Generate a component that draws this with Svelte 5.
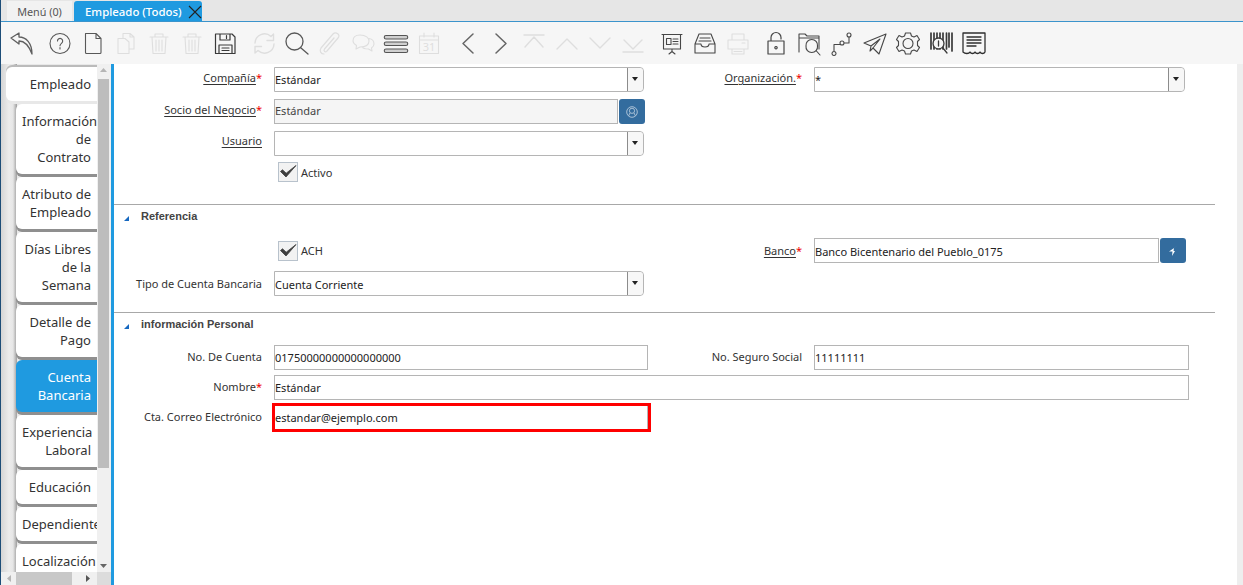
<script>
  const D = '#585858', L = '#dedede', K = '#474747';
  const tools = [
    { c: '#5f5f5f', w: 1.3, d: 'M3 9 11 4 11 8C18 8 24 14 24 25 21 17 17 12 11 12L11 15Z', gap: 1 },
    { c: D, w: 1.1, d: 'M24 14.500A10 10 0 1 1 4 14.500 10 10 0 1 1 24 14.500ZM11.500 12a2.600 2.600 0 1 1 4.200 2.100c-1 .8-1.700 1.200-1.700 2.700M14 18.500v1.500', gap: 5 },
    { c: D, w: 1.1, d: 'M6.500 4.500H17L22 9.500V23.500a1 1 0 0 1-1 1H7.500a1 1 0 0 1-1-1ZM17 4.500V9.500H22' },
    { c: L, w: 1.1, d: 'M6 9.500H13L17 13V24.500H6ZM11 9.500V4.500H18L22 8V20H17M18 4.500V8H22' },
    { c: L, w: 1.1, d: 'M5 8H23M10 8V5H18V8M7 8 8 24.500H20L21 8M11 11V22M14 11V22M17 11V22' },
    { c: L, w: 1.1, d: 'M5 8H23M10 8V5H18V8M7 8 8 24.500H20L21 8M11 11V22M14 11V22M17 11V22' },
    { c: '#3a3a3a', w: 1.2, d: 'M4.500 5H21L24 8V24.500H4.500ZM9 5V11H19V5M15.500 6.500V9.500M8 24.500V16H21V24.500M11 19H18M11 21.500H18' },
    { c: L, w: 1.4, d: 'M5 14A9.500 9.500 0 0 1 21 7.500L23.500 5V11.500H17M24 15A9.500 9.500 0 0 1 8 21.500L5 24V17.500H11.500', gap: 6 },
    { c: D, w: 1.3, d: 'M20 12.500A8.500 8.500 0 1 1 3 12.500 8.500 8.500 0 1 1 20 12.500ZM18 19 25 25' },
    { c: L, w: 1.2, d: 'M8 25C5 25 3 22 5 19L17 5C20 2 25 6 22 9L11 22C9.500 24 7 22 8.500 20L18 9' },
    { c: L, w: 1.1, d: 'M11 6C17 6 20 9 20 12 20 16 16 18 11 18L7 20 7.500 16.500C5 15 4 14 4 12 4 8 7 6 11 6ZM20 9.500C23 10 25 12 25 15 25 17 24 18 22.500 19L23 22 19.500 20C16 20 14 19.500 13 18' },
    { c: '#555', w: 1.1, f: '#d0d0d0', d: 'M4 6.500H24a1.500 1.500 0 0 1 0 3.500H4a1.500 1.500 0 0 1 0-3.500ZM4 13H24a1.500 1.500 0 0 1 0 3.500H4a1.500 1.500 0 0 1 0-3.500ZM4 20H24a1.500 1.500 0 0 1 0 3.500H4a1.500 1.500 0 0 1 0-3.500Z' },
    { c: L, w: 1.1, d: 'M4.500 7H23.500V24.500H4.500ZM4.500 11H23.500M9 4V8M19 4V8', txt: '31' },
    { c: '#666', w: 1.5, d: 'M19 5 9 14.500 19 24', gap: 6 },
    { c: '#666', w: 1.5, d: 'M9 5 19 14.500 9 24' },
    { c: L, w: 1.4, d: 'M4 6H24M5 18 14 8 23 18' },
    { c: L, w: 1.4, d: 'M4 20 14 10 24 20' },
    { c: L, w: 1.4, d: 'M4 9 14 19 24 9' },
    { c: L, w: 1.4, d: 'M5 11 14 20 23 11M4 23H24' },
    { c: K, w: 1.1, d: 'M4 5.500H24M5.500 5.500V20H22.500V5.500M14 20V23M11 25 14 22.500 17 25M8.500 9.500H13V15.500H8.500ZM15 10H20M15 12.500H20M15 15H20', gap: 6 },
    { c: K, w: 1.1, d: 'M8 5H20L24 15V24H4V15ZM4 15H10C10 19 18 19 18 15H24M9 9H19M8 12H20' },
    { c: L, w: 1.1, d: 'M8 11V5H20V11M4 11H24V20H4ZM8 20V25H20V20M18 14H21M10 22.500H18' },
    { c: K, w: 1.2, d: 'M9 12V8.500a5 5 0 0 1 10 0V10M6 12H22V25H6ZM14 17.500a1.200 1.200 0 1 0 .01 0', gap: 5 },
    { c: K, w: 1.1, d: 'M4 23V5H10L12 7H24V20M4 9H24M22.500 17A5.800 5.800 0 1 1 11 17 5.800 5.800 0 1 1 22.500 17ZM21 21.500 25 26' },
    { c: K, w: 1.1, d: 'M6 22.500a2 2 0 1 0 .01 0M6 22V15.500H12M16 14a2 2 0 1 0-4 0 2 2 0 1 0 4 0M16 14H21V8.500M23 6a2 2 0 1 0-4 0 2 2 0 1 0 4 0' },
    { c: K, w: 1.1, d: 'M25 5 3 14 10 17 19 10 12 19 18 25ZM10 17 9 22 12 19' },
    { c: K, w: 1.1, d: 'M11.500 4H16.500L17.500 7 20 8 23 6.500 25.500 10.500 23.500 12.500V16.500L25.500 18.500 23 22.500 20 21 17.500 22 16.500 25H11.500L10.500 22 8 21 5 22.500 2.500 18.500 4.500 16.500V12.500L2.500 10.500 5 6.500 8 8 10.500 7ZM19 14.500A5 5 0 1 1 9 14.500 5 5 0 1 1 19 14.500Z' },
    { c: '#3a3a3a', w: 1.7, d: 'M4 4V20M7 4V20M10 4V20M13 4V20M16 4V20M19.500 4V20M22 4V18M25 4V22', d2: 'M17 14.500A5.500 5.500 0 1 1 6 14.500 5.500 5.500 0 1 1 17 14.500ZM15.500 18.500 20 24M11.500 12V17' },
    { c: '#2f2f2f', w: 1.3, d: 'M3 4H25V23C24 25 21 25 20 23 19 25 16 25 15 23 14 25 11 25 10 23 9 25 5 25 3 23ZM7 8H21M7 11H21M7 14H21M7 17H16' }
  ];

  const tabs = [
    { lines: ['Empleado'], first: true },
    { lines: ['Información', 'de', 'Contrato'] },
    { lines: ['Atributo de', 'Empleado'] },
    { lines: ['Días Libres', 'de la', 'Semana'] },
    { lines: ['Detalle de', 'Pago'] },
    { lines: ['Cuenta', 'Bancaria'], active: true },
    { lines: ['Experiencia', 'Laboral'] },
    { lines: ['Educación'] },
    { lines: ['Dependiente'] },
    { lines: ['Localización'] }
  ];
</script>

<div class="app">
  <header class="tabbar">
    <div class="wtab">Menú (0)</div>
    <div class="wtab on">
      <span>Empleado (Todos)</span>
      <svg class="close" width="14" height="14" viewBox="0 0 14 14"><path d="M1 1 13 13M13 1 1 13" /></svg>
    </div>
  </header>

  <nav class="toolbar">
    {#each tools as t}
      <div class="tool" style:margin-left={t.gap ? t.gap + 'px' : null}>
        <svg width="28" height="28" viewBox="0 0 28 28">
          <path d={t.d} stroke={t.c} stroke-width={t.w} fill={t.f || 'none'} />
          {#if t.d2}<path d={t.d2} stroke={t.c} stroke-width="1.3" fill="#f6f6f6" />{/if}
          {#if t.txt}<text x="14" y="22" text-anchor="middle" fill={t.c}>{t.txt}</text>{/if}
        </svg>
      </div>
    {/each}
  </nav>

  <div class="body">
    <aside class="side">
      <div class="tabs">
        {#each tabs as t}
          <div class="stab" class:first={t.first} class:active={t.active}>
            {#each t.lines as l}<div class="ln">{l}</div>{/each}
          </div>
        {/each}
      </div>
      <div class="vbar">
        <svg class="arr" width="13" height="12" viewBox="0 0 13 12"><path d="M3 8 6.500 4 10 8Z" /></svg>
        <div class="vthumb"></div>
        <svg class="arr end" width="13" height="12" viewBox="0 0 13 12"><path d="M3 4 6.500 8 10 4Z" /></svg>
      </div>
      <div class="hbar">
        <svg class="hl-arrow" width="15" height="13" viewBox="0 0 15 13"><path d="M10 3 6 6.500 10 10Z" fill="#b5b5b5" /></svg>
        <div class="hthumb"></div>
        <svg class="hr" width="25" height="13" viewBox="0 0 25 13"><path d="M14 3 18 6.500 14 10Z" fill="#555" /></svg>
      </div>
      <div class="corner"></div>
    </aside>

    <main class="form">
      <section class="sec one">
        <div class="row r32">
          <label class="lb u">Compañía<b>*</b></label>
          <div class="f sel w370">Estándar<i class="drop"></i></div>
          <label class="lb u">Organización.<b>*</b></label>
          <div class="f sel w371">*<i class="drop"></i></div>
        </div>
        <div class="row r32">
          <label class="lb u">Socio del Negocio<b>*</b></label>
          <div class="combo">
            <div class="f ro w344">Estándar</div>
            <div class="btn">
              <svg width="14" height="14" viewBox="0 0 14 14" fill="none" stroke="#a9c0d6" stroke-width="1"><circle cx="7" cy="7" r="5.300" /><circle cx="7" cy="5.800" r="2.600" /><path d="M3.500 11 5 8M10.500 11 9 8" /></svg>
            </div>
          </div>
        </div>
        <div class="row r32">
          <label class="lb u usr">Usuario</label>
          <div class="f sel w370"><i class="drop"></i></div>
        </div>
        <div class="row chkrow">
          <span></span>
          <div class="chk">
            <span class="box"><svg width="20" height="20" viewBox="0 0 20 20"><path d="M2.500 9.500 8 15 18 3.500 8.200 11.200 4.500 7.800Z" /></svg></span>
            Activo
          </div>
        </div>
      </section>

      <section class="sec two">
        <h3><i class="tri"></i>Referencia</h3>
        <div class="row bankrow">
          <span></span>
          <div class="chk">
            <span class="box"><svg width="20" height="20" viewBox="0 0 20 20"><path d="M2.500 9.500 8 15 18 3.500 8.200 11.200 4.500 7.800Z" /></svg></span>
            ACH
          </div>
          <label class="lb u">Banco<b>*</b></label>
          <div class="combo">
            <div class="f low w345">Banco Bicentenario del Pueblo_0175</div>
            <div class="btn">
              <svg width="14" height="14" viewBox="0 0 14 14"><path d="M11 2 3 7.500H6.500L6 12 9 7H7.500L8 4Z" fill="#fff" /></svg>
            </div>
          </div>
        </div>
        <div class="row">
          <label class="lb">Tipo de Cuenta Bancaria</label>
          <div class="f low sel w370">Cuenta Corriente<i class="drop"></i></div>
        </div>
      </section>

      <section class="sec three">
        <h3><i class="tri"></i>información Personal</h3>
        <div class="row r30 first3">
          <label class="lb">No. De Cuenta</label>
          <div class="f w374">01750000000000000000</div>
          <label class="lb">No. Seguro Social</label>
          <div class="f w375">11111111</div>
        </div>
        <div class="row r30">
          <label class="lb">Nombre<b>*</b></label>
          <div class="f span">Estándar</div>
        </div>
        <div class="row r30">
          <label class="lb">Cta. Correo Electrónico</label>
          <div class="f hl">estandar@ejemplo.com</div>
        </div>
      </section>
    </main>
    <div class="rail"></div>
  </div>
</div>

<style>
  :global(body) { margin: 0; background: #fff; }
  .app {
    width: 1243px; height: 585px; overflow: hidden; position: relative;
    font-family: "Noto Sans", "Open Sans", sans-serif; font-size: 11px; color: #333;
    display: flex; flex-direction: column;
    border-left: 1px solid #1d4d78; box-sizing: border-box;
  }
  .tabbar {
    height: 21px; flex: none; display: flex; align-items: flex-end; gap: 2px;
    padding-left: 6px; background: #e6e6e6; border-bottom: 1px solid #3b94cc;
  }
  .wtab {
    height: 20px; width: 65px; box-sizing: border-box; background: #f2f2f2; color: #555;
    display: flex; align-items: center; justify-content: center; font-size: 10.800px;
  }
  .wtab.on {
    width: 128px; background: #1f9ae0; color: #fff; font-size: 11.400px; font-weight: 500;
    justify-content: flex-start; padding-left: 11px; border-radius: 3px 3px 0 0; position: relative;
  }
  .close { position: absolute; left: 114px; top: 4px; }
  .close path { stroke: #222; stroke-width: 1.100; fill: none; }

  .toolbar {
    height: 42px; flex: none; background: #f6f6f6; display: flex; align-items: center;
    padding-left: 3px;
  }
  .tool { width: 33px; height: 42px; display: flex; align-items: center; justify-content: center; flex: none; }
  .tool path { stroke-linejoin: round; stroke-linecap: round; }
  .tool text { font: 11px "Noto Sans", sans-serif; stroke: none; }

  .body { flex: 1; display: flex; min-height: 0; position: relative; }

  .side {
    width: 110px; flex: none; position: relative; overflow: hidden;
    display: grid; grid-template-columns: 96px 14px; grid-template-rows: 508px 13px;
    background: linear-gradient(90deg, #d5d5d5, #ececec 50%, #e6e6e6 75%, #9d9d9d);
    background-size: 16px 100%; background-repeat: no-repeat; background-color: #e8e8e8;
  }
  .tabs { overflow: hidden; padding-top: 3px; display: flex; flex-direction: column; }
  .stab {
    margin-left: 15px; background: #fff; border-radius: 6px 0 0 6px; box-sizing: border-box;
    padding: 8px 6px 8px 6px; text-align: right; color: #333; font-size: 13px; line-height: 18px;
    white-space: nowrap; box-shadow: 0 3px 0 #8f8f8f;
    margin-bottom: 3px; flex: none; width: 81px;
  }
  .stab.first { margin-left: 5px; width: 91px; box-shadow: 0 -2px 0 #bbb, 0 3px 0 #e8e8e8; }
  .stab.active { background: #1f9ae0; color: #fff; }

  .vbar { grid-column: 2; grid-row: 1; background: #f0f0f0; display: flex; flex-direction: column; align-items: center; padding-right: 1px; }
  .arr { flex: none; }
  .arr path { fill: #b5b5b5; }
  .arr.end { margin-top: auto; }
  .arr.end path { fill: #666; }
  .vthumb { width: 11px; height: 389px; background: #bdbdbd; margin-top: 3px; }
  .hbar { grid-column: 1; grid-row: 2; background: #f0f0f0; display: flex; align-items: center; }
  .hthumb { width: 56px; height: 13px; background: #c8c8c8; }
  .corner { grid-column: 2; grid-row: 2; background: #dcdcdc; }

  .form {
    flex: 1; min-width: 0; background: #fff; border-left: 3px solid #1f9ae0; box-sizing: border-box;
    padding-right: 28px;
  }
  .sec { border-bottom: 1px solid #a8a8a8; }
  .sec.one { padding-top: 3px; height: 137px; }
  .sec.two { height: 107px; }
  .sec.three { border-bottom: 0; }
  h3 {
    margin: 0; height: 23px; box-sizing: border-box; padding: 0 0 2px 27px;
    display: flex; align-items: center; position: relative;
    font: bold 11px "Liberation Sans", sans-serif; color: #444;
  }
  .tri {
    position: absolute; left: 10px; top: 11px; width: 0; height: 0;
    border-left: 5px solid transparent; border-bottom: 5px solid #1668c0;
  }

  .row {
    display: grid; grid-template-columns: 148px 392px 148px auto;
    align-items: center;
  }
  .r32 { height: 32px; align-items: start; }
  .r30 { height: 30px; align-items: start; }
  .r30 .lb { line-height: 24px; }
  .chkrow { height: 30px; margin-top: -6px; }
  .bankrow { height: 33px; margin-top: 6px; margin-bottom: 4px; }
  .first3 { margin-top: 9px; }

  .lb { text-align: right; color: #333; white-space: nowrap; line-height: 22px; font-size: 11px; }
  .lb.u { text-decoration: underline; text-underline-offset: 2px; }
  .lb.usr { line-height: 20px; }
  .lb b { color: #e00; font-weight: 400; display: inline-block; text-decoration: none; }

  .f {
    margin-left: 12px; height: 25px; box-sizing: border-box; border: 1px solid #b5b5b5; background: #fff;
    display: flex; align-items: center; padding-bottom: 1px; color: #222; position: relative;
    white-space: nowrap; font-size: 11px; flex: none;
  }
  .f.low { padding-bottom: 0; padding-top: 1px; }
  .combo { display: flex; gap: 1px; }
  .f.ro { background: #f5f5f5; color: #444; padding-bottom: 3px; }
  .sel { border-radius: 0 4px 4px 0; }
  .w370 { width: 370px; }
  .w371 { width: 371px; }
  .w344 { width: 344px; }
  .w345 { width: 345px; }
  .w374 { width: 374px; }
  .w375 { width: 375px; }
  .span { grid-column: 2 / 5; width: 915px; }
  .drop {
    position: absolute; right: 0; top: 0; bottom: 0; width: 15px; border-left: 1px solid #8c8c8c;
    background: #f7f7f7; border-radius: 0 4px 4px 0;
  }
  .drop::after {
    content: ""; position: absolute; left: 4px; top: 9px; width: 0; height: 0;
    border: 3.500px solid transparent; border-top: 4px solid #222; border-bottom: 0;
  }
  .btn {
    width: 26px; height: 25px; background: #336c9e; border-radius: 3px; flex: none;
    display: flex; align-items: center; justify-content: center;
  }
  .chk { display: flex; align-items: center; gap: 3px; margin-left: 16px; color: #333; }
  .box {
    width: 20px; height: 20px; box-sizing: border-box; border: 1px solid #b8c2cc; background: #f2f2f2;
    display: block; position: relative;
  }
  .box svg { position: absolute; left: -1px; top: -1px; }
  .box path { fill: #3e3e3e; stroke: #3e3e3e; stroke-width: .8; }
  .f.hl { margin: 1px 0 0 13px; width: 373px; height: 23px; border: 0; outline: 3px solid #f00; box-shadow: inset -1px 0 0 #b5b5b5; }

  .rail { position: absolute; right: 0; top: 0; bottom: 0; width: 6px; background: #eee; }
</style>
